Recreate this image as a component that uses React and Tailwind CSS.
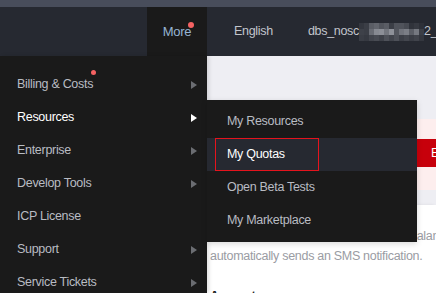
import React from 'react';

const mainMenu = [
  { label: 'Billing & Costs', arrow: true, dot: true },
  { label: 'Resources', arrow: true, active: true },
  { label: 'Enterprise', arrow: true },
  { label: 'Develop Tools', arrow: true },
  { label: 'ICP License', arrow: false },
  { label: 'Support', arrow: true },
  { label: 'Service Tickets', arrow: true },
];

const subMenu = ['My Resources', 'My Quotas', 'Open Beta Tests', 'My Marketplace'];

// mosaic over the account name
const mosaic = [
  ['#34373f', '#3b3e46', '#5a5d65', '#62656d', '#52555d', '#5a5d65', '#3b3e46', '#50535b', '#50535b', '#484b53', '#30333b', '#363941', '#2d3038'],
  ['#3e4149', '#3b3e46', '#696c74', '#878a92', '#8c8f97', '#73767e', '#8e9199', '#53565e', '#71747c', '#7b7e86', '#5b5e66', '#757880', '#3b3e46'],
  ['#3a3d45', '#363941', '#42454d', '#484b53', '#3f424a', '#4e5159', '#42454d', '#4d5058', '#3c3f47', '#43464e', '#3a3d45', '#40434b', '#34373f'],
];

const Arrow = ({ active }) => (
  <svg width="6" height="8" viewBox="0 0 6 8">
    <path d="M0 0 L6 4 L0 8 Z" fill={active ? '#ffffff' : '#6b6d72'} />
  </svg>
);

const App = () => {
  return (
    <div className="relative w-[436px] h-[293px] overflow-hidden bg-[#eeeef3] font-['Liberation_Sans',Arial,sans-serif] text-[12.5px] tracking-[-0.3px]">
      <div className="h-[7px] bg-[#484d5b]" />

      {/* header */}
      <div className="flex h-[49px] bg-[#262931] overflow-hidden">
        <div className="w-[147px] shrink-0" />
        <div className="relative flex w-[60px] shrink-0 items-center justify-center bg-[#1a1a1a] text-[13px] text-[#96b4d2]">
          More
          <span className="absolute left-[41px] top-[15px] h-[6px] w-[6px] rounded-full bg-[#f56262]" />
        </div>
        <div className="ml-[27px] flex shrink-0 items-center text-[#c2c5cc]">English</div>
        <div className="ml-[35px] flex shrink-0 items-center text-[#c2c5cc]">
          <span>dbs_nosc</span>
          <div className="flex flex-col">
            {mosaic.map((row, i) => (
              <div key={i} className="flex">
                {row.map((c, j) => (
                  <div key={j} className="h-[6px] w-[5px]" style={{ backgroundColor: c }} />
                ))}
              </div>
            ))}
          </div>
          <span>2_</span>
        </div>
      </div>

      <div className="flex h-[237px]">
        {/* main dropdown */}
        <div className="z-10 w-[207px] shrink-0 bg-[#1a1a1a] pt-[12px] shadow-[2px_0_4px_rgba(0,0,0,0.12)]">
          {mainMenu.map((item) => (
            <div key={item.label} className="flex h-[33px] items-center justify-between pl-[17px] pr-[10px]">
              <span className={`relative ${item.active ? 'text-white' : 'text-[#b9bcc3]'}`}>
                {item.label}
                {item.dot && (
                  <span className="absolute -right-[3px] top-[-5px] h-[5px] w-[5px] rounded-full bg-[#f56262]" />
                )}
              </span>
              {item.arrow && <Arrow active={item.active} />}
            </div>
          ))}
        </div>

        {/* page content */}
        <div className="flex min-w-0 flex-1 flex-col overflow-hidden">
          <div className="h-[63px] shrink-0" />
          <div className="flex h-[71px] shrink-0 bg-[#fdeeee] pt-[20px]">
            <div className="ml-auto mr-[-14px] h-[28px] w-[40px] shrink-0 bg-[#c7000b] pl-[21px] leading-[28px] text-white">E</div>
          </div>
          <div className="h-[15px] shrink-0" />
          <div className="flex-1 shrink-0 bg-white pl-[3px] pt-[21px] text-[#9a9ca3] shadow-[-2px_0_3px_rgba(0,0,0,0.08)]">
            <div className="h-[20px] overflow-hidden whitespace-nowrap leading-[20px]">
              <span className="inline-block w-[200px]" />
              balance
            </div>
            <div className="whitespace-nowrap leading-[20px]">automatically sends an SMS notification.</div>
            <div className="mt-[21px] font-bold text-[#222]">Amount</div>
          </div>
        </div>
      </div>

      {/* submenu */}
      <div className="absolute left-[207px] top-[100px] z-20 w-[210px] bg-[#1a1a1a] pb-[5px] pt-[5px] shadow-[0_2px_6px_rgba(0,0,0,0.15)]">
        {subMenu.map((label) =>
          label === 'My Quotas' ? (
            <div key={label} className="h-[33px] bg-[#262931]">
              <div className="ml-[8px] flex h-full w-[104px] items-center border border-[#e5141d] pl-[11px] text-white">
                {label}
              </div>
            </div>
          ) : (
            <div key={label} className="flex h-[33px] items-center pl-[20px] text-[#b9bcc3]">
              {label}
            </div>
          )
        )}
      </div>
    </div>
  );
};

export default App;
